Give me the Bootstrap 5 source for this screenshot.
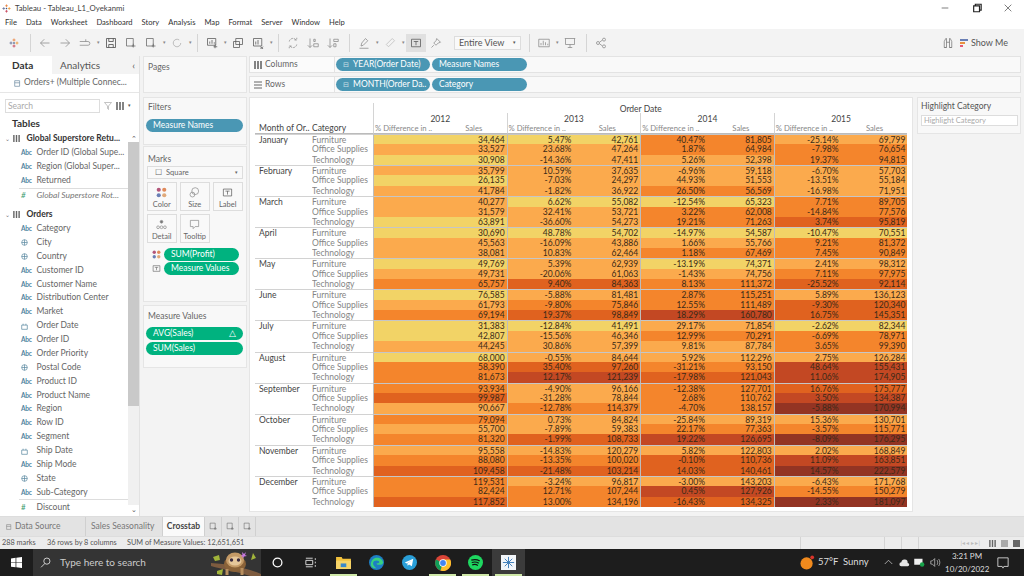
<!DOCTYPE html>
<html lang="en"><head><meta charset="utf-8"><title>Tableau</title>
<link href="https://cdn.jsdelivr.net/npm/bootstrap@5.3.0/dist/css/bootstrap.min.css" rel="stylesheet">
<style>
html,body{width:1024px;height:576px;overflow:hidden;margin:0}
body{font-family:Lato,"Liberation Sans",sans-serif;font-size:8.5px;color:#555;background:#f3f3f3;line-height:1.1}
svg.i{width:12px;height:12px;fill:none;stroke:#888;stroke-width:1;flex:none}
.titlebar{height:16px;background:#fff;color:#444;font-size:7.8px;padding-left:1px}
.winbtn{width:31.5px;text-align:center}
.menubar{height:13px;background:#fff;padding-left:5px;gap:9px;color:#333;font-size:7.6px}
.toolbar{height:27px;background:#f3f3f3;padding-left:4px}
.tb{width:20px;height:18px;flex:none}.tb.act{background:#e0e0e0}
.tc{width:6px;flex:none;text-align:center;font-size:5px;color:#888}
.tdiv{width:1px;height:18px;background:#d5d5d5;margin:0 4px;flex:none}
.fit{width:67px;height:14px;background:#f9f9f9;border:1px solid #ddd;font-size:9px;color:#555;padding-left:4px;margin:0 0 0 8px;flex:none}
.main{height:460px}
.pane{width:140px;background:#fff;border-right:1px solid #e2e2e2;flex:none}
.dtab{height:18px;line-height:18px;font-size:10px}
.dtab .on{width:52px;background:#fff;font-weight:700;color:#333;padding-left:12px}
.dtab .off{flex:1;background:#f3f3f3;padding-left:8px;color:#555}
.src{height:19px;padding-left:14px;font-size:8.5px;color:#666;border-bottom:1px solid #e6e6e6}
.srch{height:20px;padding:5px 0 0 5px}
.form-control.sbox{width:95px;height:14px;min-height:0;border:1px solid #ddd;border-radius:0;padding:0 2px;font-size:8.5px;line-height:12px}
.sbox::placeholder{color:#aaa}
.thead{height:14px;padding-left:12px;font-size:10px;font-weight:700;color:#333;line-height:14px;margin-top:3px}
.flist{flex:1;padding-top:2px;overflow:hidden}
.f{height:13.88px;font-size:8.5px;color:#666;white-space:nowrap}
.f .ty{width:36.5px;flex:none;font-size:6.5px;font-weight:700;color:#4f83a0;padding-left:21px;letter-spacing:-.2px}
.f.g{padding-left:5px;font-weight:700;color:#333;font-size:8.5px}
.f.g .ch{width:8px;color:#777;font-size:6px;font-weight:400}
.f.g svg{width:7px;height:7px;margin:0 6.5px 0 0}
.f.m .ty{color:#3b9c6f;font-size:8px;font-weight:400}
.f.it{font-style:italic;color:#777}
.sep{border-top:1px solid #ddd;margin:0 0 0 19px}
.sbar{width:11px;flex:none;margin-top:4px;background:#f0f0f0;color:#555;font-size:7px;text-align:center}
.sbar .arr{height:8px;line-height:8px;background:#fff}.sbar .th{height:264px;background:#c9c9c9}
.midcol{width:104px;margin-left:3px;flex:none}
.crd{background:#f8f8f8;border:1px solid #e5e5e5;border-radius:0}
.ct{font-size:8.5px;color:#666;padding:6px 0 0 4px}
.ct.ftl{padding-top:5px}.ct.mtl{padding-top:8px}
.fp{margin:7px 0 0 2px;width:97px}
.pill.badge{display:flex;align-items:center;height:13px;padding:0 7px;font-size:8.5px;font-weight:400;color:#fff;border-radius:7px;line-height:13px;white-space:nowrap}
.pb{background:#4a97b4}.pg{background:#00b27f}
.pw{width:94px;margin-left:1px}.pw2{width:95px;margin-left:2px}
.pic{font-size:7px;opacity:.7;margin-right:4px}
.mk{width:29.5px;height:28.5px;border:1px solid #ddd;background:#f9f9f9;font-size:7.5px;color:#666;border-radius:0;padding:2px 0 0;line-height:1}
.mk svg{display:block;margin:0 auto 3px;width:11px;height:11px}
.mks{gap:3.500px;margin:3px 0 0 3px}
.dd{height:13px;margin:2px 3px 0;border:1px solid #ddd;background:#f9f9f9;color:#666;font-size:7.5px;padding-left:7px}
.rt{width:772px;margin-left:2px;flex:none}
.shelf{height:17px;background:#f9f9f9;border:1px solid #e3e3e3}
.shelf .lb{width:85px;border-right:1px solid #e3e3e3;padding-left:4px;font-size:8.5px;color:#666;height:100%;background:#fbfbfb}
.shelf .lb svg{width:8px;height:8px;margin-right:3px}
.viz{width:664px;height:415px;background:#fff;border:1px solid #e5e5e5;padding:5px 0 0 5px}
.xt{display:grid;grid-template-columns:57px 61px repeat(8,66.8px);grid-template-rows:10px 10px 11px;grid-auto-rows:10.36px;font-size:8.5px;line-height:10.3px;width:652.4px}
.xt>div{overflow:hidden;white-space:nowrap}
.hl{text-align:center;color:#444;font-size:8.5px;line-height:12px}
.vl{border-left:1px solid #d4d4d4}
.xt .sh{color:#888;padding-left:1px;font-size:7.7px;border-bottom:1px solid #bbb;line-height:11.5px}
.xt .sh.d{color:#444;padding-left:4px;font-size:8.5px}
.xt .sh.cat{color:#444;padding-left:0;font-size:8.5px}
.sh.s{text-align:center}
.mo{grid-row:span 3;color:#444;padding-left:4px;border-top:1px solid #d2d2d2;line-height:11px}
.ca{color:#858585}.ca.t{border-top:1px solid #d2d2d2}
.n{text-align:right;padding-right:2px;color:#3a2a18;font-size:8.5px}
.n.t{border-top:1px solid #c6c6c6}.n.y{border-left:1px solid #bdbdbd}
.l0{background:#f2d366}.l1{background:#fbaa4d}.l2{background:#f4852c}.l3{background:#e0621f}.l4{background:#c34823}.l5{background:#933423}
.hc{width:104px;height:37px;margin-left:4px}
.form-control.hbox{width:97px;height:11px;min-height:0;border:1px solid #ddd;border-radius:0;margin:4px 0 0 3px;padding:0 2px;font-size:7.5px;line-height:9px}
.hbox::placeholder{color:#aaa}
.tabs{height:20px;background:#e3e3e3;border-top:1px solid #ddd;font-size:8.5px;color:#777}
.tabs>div{height:100%;border-right:1px solid #d0d0d0}
.tabs .on{background:#fafafa;color:#444;font-weight:700;width:42px;justify-content:center;margin-left:0}
.tabs svg{width:9px;height:9px}
.status{height:13px;background:#ececec;border-top:1px solid #ddd;font-size:7.3px;color:#555}
.status .c{border-left:1px solid #d4d4d4;height:100%}
.task{height:27px;background:#1d1d1d;color:#ddd}
.task .start{width:33px}
.task .search{width:228px;height:100%;background:#343434;font-size:10px;color:#ccc;padding-left:6px}
.ti{width:33px;height:100%;flex:none;position:relative}
.ti.on{background:#3b3b3b}
.ti.u::after{content:"";position:absolute;left:3px;right:3px;bottom:0;height:2px;background:#cfe8a8}
.tray{font-size:9.5px;color:#ddd}
.clock{width:44px;text-align:center;font-size:8px;line-height:13px;color:#ddd}
</style></head><body>
<svg class="d-none" xmlns="http://www.w3.org/2000/svg">
<symbol id="back" viewBox="0 0 16 16"><path d="M14 8H2M7 3 2 8l5 5"/></symbol>
<symbol id="fwd" viewBox="0 0 16 16"><path d="M2 8h12M9 3l5 5-5 5"/></symbol>
<symbol id="rep" viewBox="0 0 16 16"><path d="M1 6h11a2 2 0 0 1 0 5H1M9 3v3"/></symbol>
<symbol id="save" viewBox="0 0 16 16"><path d="M2 2h12v12H2zM5 2v4h6V2M5 14v-4h6v4" stroke="#444"/></symbol>
<symbol id="ds" viewBox="0 0 16 16"><path d="M2 2h9v10H2zM11 9v5M9 12h5" stroke="#666"/></symbol>
<symbol id="ref" viewBox="0 0 16 16"><path d="M13 8a5 5 0 1 1-2-4" stroke="#aaa"/></symbol>
<symbol id="sheet" viewBox="0 0 16 16"><path d="M2 2h11v9H2zM5 9V6M8 9V4M11 9V7M12 10v5M10 13h5" stroke="#555"/></symbol>
<symbol id="dup" viewBox="0 0 16 16"><path d="M5 2h9v8H5zM2 6h8v8H2z" stroke="#555"/></symbol>
<symbol id="clr" viewBox="0 0 16 16"><path d="M2 2h11v10H2zM5 10V6M8 10V4M11 13l4 3M15 13l-4 3" stroke="#555"/></symbol>
<symbol id="swap" viewBox="0 0 16 16"><path d="M3 6a5 5 0 0 1 9-2M13 10a5 5 0 0 1-9 2M10 4h3V1M6 12H3v3" stroke-dasharray="3 1"/></symbol>
<symbol id="asc" viewBox="0 0 16 16"><path d="M4 2v12M1 11l3 3 3-3M9 3h2v3H9zM9 9h6v4H9z"/></symbol>
<symbol id="desc" viewBox="0 0 16 16"><path d="M4 2v12M1 11l3 3 3-3M9 3h6v3H9zM9 9h3v4H9z"/></symbol>
<symbol id="pen" viewBox="0 0 16 16"><path d="M10 2l3 3-6 6-3 1 1-4zM2 15h12"/></symbol>
<symbol id="clip" viewBox="0 0 16 16"><path d="M11 2l3 3-8 8-3-3z" stroke="#bbb"/></symbol>
<symbol id="T" viewBox="0 0 16 16"><path d="M2 3h12v10H2zM5 6h6M8 6v5" stroke="#555"/></symbol>
<symbol id="pin" viewBox="0 0 16 16"><path d="M9 2l5 5-3 1-3 3-3-3 3-3zM5 11l-3 3"/></symbol>
<symbol id="chart" viewBox="0 0 16 16"><path d="M1 3h14v10H1zM4 11V8M7 11V5M10 11V7M13 11V9"/></symbol>
<symbol id="pres" viewBox="0 0 16 16"><path d="M1 2h14M2 2v8h12V2M8 10v4M5 14h6"/></symbol>
<symbol id="share" viewBox="0 0 16 16"><circle cx="4" cy="8" r="2"/><circle cx="12" cy="3.500" r="2"/><circle cx="12" cy="12.500" r="2"/><path d="M6 7l4-3M6 9l4 3"/></symbol>
<symbol id="bino" viewBox="0 0 16 16"><path d="M3 14V6l2-4h1v12zM10 14V2h1l2 4v8zM3 14h3M10 14h3M6 7h4" stroke="#777"/></symbol>
<symbol id="logo" viewBox="0 0 16 16"><path d="M8 2v4M6 4h4" stroke="#e8762b"/><path d="M8 10v4M6 12h4" stroke="#c2344d"/><path d="M2 8h4M4 6v4" stroke="#5b6591"/><path d="M10 8h4M12 6v4" stroke="#eb912b"/><path d="M7 8h2M8 7v2" stroke="#1f447a"/></symbol>
<symbol id="cols" viewBox="0 0 8 8"><path d="M1 0v8M4 0v8M7 0v8" stroke="#666" stroke-width="1.600"/></symbol>
<symbol id="rows" viewBox="0 0 8 8"><path d="M0 1h8M0 4h8M0 7h8" stroke="#666" stroke-width="1.200"/></symbol>
</svg>

<div class="titlebar d-flex align-items-center"><svg class="i" viewBox="0 0 16 16" style="width:11px;height:11px"><use href="#logo"/></svg><span style="margin-left:3px">Tableau - Tableau_L1_Oyekanmi</span>
 <div class="ms-auto d-flex align-items-center">
  <div class="winbtn"><svg class="i" viewBox="0 0 12 12" style="width:10px;height:10px"><path d="M2 6h8" stroke="#666"/></svg></div>
  <div class="winbtn"><svg class="i" viewBox="0 0 12 12" style="width:10px;height:10px"><path d="M2 3.500h7v7H2zM4 3.500V1.500h7v7H9" stroke="#222" stroke-width="1.400"/></svg></div>
  <div class="winbtn"><svg class="i" viewBox="0 0 12 12" style="width:10px;height:10px"><path d="M2 2l8 8M10 2l-8 8" stroke="#666"/></svg></div>
 </div></div>
<div class="menubar d-flex align-items-center"><span>File</span><span>Data</span><span>Worksheet</span><span>Dashboard</span><span>Story</span><span>Analysis</span><span>Map</span><span>Format</span><span>Server</span><span>Window</span><span>Help</span></div>

<div class="toolbar d-flex align-items-center" id="tbar"></div>

<div class="main d-flex">
 <div class="pane d-flex flex-column">
  <div class="dtab d-flex"><div class="on">Data</div><div class="off d-flex justify-content-between"><span>Analytics</span><span class="pe-1">‹</span></div></div>
  <div class="src d-flex align-items-center"><svg class="i" viewBox="0 0 10 12" style="width:7px;height:9px;margin-right:3px;stroke:#6d8aa0"><path d="M1 2h7v8H1zM1 5h7"/></svg>Orders+ (Multiple Connec...</div>
  <div class="srch d-flex align-items-center"><input class="form-control sbox" placeholder="Search"><svg class="i ms-1" style="width:8px;height:8px" viewBox="0 0 16 16"><path d="M1 1h14L9 8v7l-2-2V8z"/></svg><svg class="i ms-1" style="width:8px;height:8px" viewBox="0 0 8 8"><use href="#cols"/></svg><span class="ms-1" style="font-size:5px">▾</span></div>
  <div class="thead">Tables</div>
  <div class="d-flex flex-grow-1" style="min-height:0">
   <div class="flist" id="flist"></div>
   <div class="sbar d-flex flex-column"><div class="arr">⌃</div><div class="th"></div><div class="flex-grow-1"></div><div class="arr" style="height:11px">⌄</div></div>
  </div>
 </div>
 <div class="midcol d-flex flex-column">
  <div class="crd" style="height:37px"><div class="ct">Pages</div></div>
  <div class="crd mt-1" style="height:48px"><div class="ct ftl">Filters</div><div class="fp"><span class="pill badge pb">Measure Names</span></div></div>
  <div class="crd" style="height:156px;margin-top:1px"><div class="ct mtl">Marks</div>
   <div class="dd d-flex align-items-center"><span class="me-1">☐</span>Square<span class="ms-auto pe-1" style="font-size:5px">▾</span></div>
   <div class="mks d-flex flex-wrap">
    <button class="btn mk"><svg viewBox="0 0 16 16"><circle cx="4" cy="4" r="3" fill="#b3567a" stroke="none"/><circle cx="12" cy="4" r="3" fill="#e08a5a" stroke="none"/><circle cx="4" cy="12" r="3" fill="#6a7fb5" stroke="none"/><circle cx="12" cy="12" r="3" fill="#e0a97a" stroke="none"/></svg>Color</button>
    <button class="btn mk"><svg class="i" viewBox="0 0 16 16"><circle cx="9" cy="6" r="5"/><circle cx="5" cy="11" r="3.500"/></svg>Size</button>
    <button class="btn mk"><svg class="i" viewBox="0 0 16 16"><use href="#T"/></svg>Label</button>
    <button class="btn mk"><svg class="i" viewBox="0 0 16 16"><circle cx="8" cy="4" r="2" fill="#777"/><circle cx="3" cy="12" r="2"/><circle cx="8" cy="12" r="2"/><circle cx="13" cy="12" r="2"/></svg>Detail</button>
    <button class="btn mk"><svg class="i" viewBox="0 0 16 16"><path d="M2 2h12v9H9l-3 3v-3H2z"/></svg>Tooltip</button>
   </div>
   <div class="d-flex align-items-center" style="margin:5px 0 0 8px;gap:3px"><svg viewBox="0 0 16 16" style="width:9px;height:9px;flex:none"><circle cx="4" cy="4" r="3" fill="#b3567a"/><circle cx="12" cy="4" r="3" fill="#e08a5a"/><circle cx="4" cy="12" r="3" fill="#6a7fb5"/><circle cx="12" cy="12" r="3" fill="#e0a97a"/></svg><span class="pill badge pg" style="width:75px">SUM(Profit)</span></div>
   <div class="d-flex align-items-center" style="margin:1px 0 0 8px;gap:3px"><svg class="i" viewBox="0 0 16 16" style="width:9px;height:9px"><use href="#T"/></svg><span class="pill badge pg" style="width:75px">Measure Values</span></div>
  </div>
  <div class="crd" style="height:63px;margin-top:3px"><div class="ct">Measure Values</div>
   <div style="margin:6px 3px 0 2px"><span class="pill badge pg justify-content-between">AVG(Sales)<span>△</span></span><span class="pill badge pg" style="margin-top:2px">SUM(Sales)</span></div></div>
 </div>
 <div class="rt d-flex flex-column">
  <div class="shelf d-flex align-items-center"><div class="lb d-flex align-items-center"><svg class="i" viewBox="0 0 8 8"><use href="#cols"/></svg>Columns</div><span class="pill badge pb pw"><span class="pic">⊟</span>YEAR(Order Date)</span><span class="pill badge pb pw2">Measure Names</span></div>
  <div class="shelf d-flex align-items-center" style="margin-top:3px"><div class="lb d-flex align-items-center"><svg class="i" viewBox="0 0 8 8"><use href="#rows"/></svg>Rows</div><span class="pill badge pb pw"><span class="pic">⊟</span>MONTH(Order Da..</span><span class="pill badge pb pw2">Category</span></div>
  <div class="d-flex" style="margin-top:4px">
   <div class="viz"><div class="xt" id="xt"></div></div>
   <div class="crd hc"><div class="ct" style="padding:4px 0 0 3px;color:#555">Highlight Category</div><input class="form-control hbox" placeholder="Highlight Category"></div>
  </div>
 </div>
</div>

<div class="tabs d-flex">
 <div class="d-flex align-items-center" style="width:86px;padding-left:6px"><svg class="i" viewBox="0 0 10 12" style="width:6px;height:8px;margin-right:3px"><path d="M1 2h7v8H1zM1 5h7"/></svg>Data Source</div>
 <div class="d-flex align-items-center" style="width:77px;padding-left:5px">Sales Seasonality</div>
 <div class="on d-flex align-items-center">Crosstab</div>
 <div class="d-flex align-items-center justify-content-center" style="width:17px"><svg class="i" viewBox="0 0 16 16"><use href="#ds"/></svg></div>
 <div class="d-flex align-items-center justify-content-center" style="width:17px"><svg class="i" viewBox="0 0 16 16"><use href="#ds"/></svg></div>
 <div class="d-flex align-items-center justify-content-center" style="width:17px"><svg class="i" viewBox="0 0 16 16"><use href="#ds"/></svg></div>
</div>
<div class="status d-flex align-items-center">
 <span style="width:47px;padding-left:2px">288 marks</span><span style="width:80px">36 rows by 8 columns</span><span style="width:673px">SUM of Measure Values: 12,651,651</span>
 <div class="c" style="width:84px"></div><div class="c" style="width:17px"></div><div class="c" style="width:17px"></div><div class="c d-flex align-items-center flex-grow-1 justify-content-end pe-1" style="gap:5px;font-size:6px;color:#bbb"><span class="me-1">|◂ ◂ ▸ ▸|</span><svg viewBox="0 0 8 8" style="width:7px;height:7px"><use href="#cols"/></svg><svg viewBox="0 0 8 8" style="width:7px;height:7px"><rect width="8" height="8" fill="#aaa"/></svg><svg viewBox="0 0 8 8" style="width:7px;height:7px"><rect width="8" height="8" fill="#666"/></svg></div>
</div>

<div class="task d-flex align-items-center">
 <div class="start d-flex justify-content-center"><svg viewBox="0 0 12 12" style="width:11px;height:11px"><path d="M0 1.500l5-.7V5.700H0zM5.800.7 12 0v5.700H5.800zM0 6.300h5v4.900l-5-.7zM5.800 6.300H12V12l-6.200-.8z" fill="#fff"/></svg></div>
 <div class="search d-flex align-items-center"><svg viewBox="0 0 16 16" style="width:11px;height:11px;margin:0 9px 0 1px;flex:none" fill="none" stroke="#ddd" stroke-width="1.300"><circle cx="10" cy="6" r="4.500"/><path d="M7 9.500 1.500 15"/></svg><span>Type here to search</span>
  <svg class="ms-auto" viewBox="0 0 52 27" style="width:52px;height:27px;flex:none"><path d="M2 17c14 4 34 7 50 14l0-6C38 19 20 15 2 14z" fill="#7d5b3f"/><ellipse cx="26" cy="15" rx="11" ry="8" fill="#8a6238"/><ellipse cx="26" cy="11" rx="9" ry="7.500" fill="#c49a66"/><ellipse cx="26" cy="12" rx="6.500" ry="4.500" fill="#e6c79a"/><circle cx="22.500" cy="11" r="1.700" fill="#3a2a3e"/><circle cx="29.500" cy="11" r="1.700" fill="#3a2a3e"/><path d="M18 20v6M33 19v7" stroke="#b88f5f" stroke-width="3"/><path d="M4 8l6-2 1 5-5 1zM8 22l6-2-1 6-5-1zM44 4l3 5-5 2z" fill="#a2b53a"/><path d="M33 3l2 2 2-2-1 3 2 1-3 .5-1 2-.5-2-2-.5 2-1z" fill="#c778df"/></svg></div>
 <div class="ti d-flex align-items-center justify-content-center"><svg viewBox="0 0 12 12" style="width:11px;height:11px"><circle cx="6" cy="6" r="4.800" fill="none" stroke="#fff" stroke-width="1.400"/></svg></div>
 <div class="ti d-flex align-items-center justify-content-center"><svg viewBox="0 0 14 12" style="width:12px;height:11px" fill="none" stroke="#ddd" stroke-width="1.100"><path d="M1 1h8M1 11h8M1 3.500h8v5H1zM12 1v2M12 5v2M12 9v2"/></svg></div>
 <div class="ti u d-flex align-items-center justify-content-center"><svg viewBox="0 0 16 14" style="width:15px;height:13px"><path d="M0 1h6l1 2h9v11H0z" fill="#f3c23c"/><rect y="5" width="16" height="9" fill="#f7d568"/><rect x="5" y="8" width="6" height="4" fill="#3a89c9"/></svg></div>
 <div class="ti d-flex align-items-center justify-content-center"><svg viewBox="0 0 16 16" style="width:15px;height:15px"><circle cx="8" cy="8" r="8" fill="#1d7ec4"/><path d="M2 10c0-5 4-8 8-7 3 .7 5 3 5 5 0 2-2 2.500-5 2.500-1 0-2-1-2-1.500 2 0 3-.5 3-1.500C11 6 8 5 5.500 6.500 3.500 8 4 12 8 14c-3 .5-6-1-6-4z" fill="#38d07f"/></svg></div>
 <div class="ti d-flex align-items-center justify-content-center"><svg viewBox="0 0 16 16" style="width:15px;height:15px"><circle cx="8" cy="8" r="8" fill="#2a9fd8"/><path d="M3 8l9-4-1.500 8-3-2-1.500 1.500-.3-2.500L10 6 5 9z" fill="#fff"/></svg></div>
 <div class="ti u d-flex align-items-center justify-content-center"><svg viewBox="0 0 16 16" style="width:16px;height:16px"><circle cx="8" cy="8" r="8" fill="#db4437"/><path d="M8 8 1 4.500A8 8 0 0 0 5.500 15.600z" fill="#0f9d58"/><path d="M8 4.500h7.200A8 8 0 0 1 5.500 15.600L8 8z" fill="#fbc02d"/><circle cx="8" cy="8" r="3.700" fill="#fff"/><circle cx="8" cy="8" r="2.900" fill="#4285f4"/></svg></div>
 <div class="ti u d-flex align-items-center justify-content-center"><svg viewBox="0 0 16 16" style="width:15px;height:15px"><circle cx="8" cy="8" r="8" fill="#1ed760"/><path d="M3.500 5.500c3-1 6.500-.7 9 .8M4 8c2.500-.8 5.500-.5 7.500.7M4.500 10.500c2-.6 4.500-.4 6 .6" fill="none" stroke="#111" stroke-width="1.300"/></svg></div>
 <div class="ti u on d-flex align-items-center justify-content-center"><svg viewBox="0 0 16 16" style="width:15px;height:15px"><rect width="16" height="16" fill="#f2f6fa"/><path d="M8 2v12M2 8h12M4 4l8 8M12 4l-8 8" stroke="#3a7bb8"/></svg></div>
 <div class="tray ms-auto d-flex align-items-center">
  <svg viewBox="0 0 16 16" style="width:15px;height:15px;margin-right:3px"><circle cx="7" cy="9" r="6.500" fill="#f18a1d"/><circle cx="13" cy="2.500" r="2" fill="#d9342b"/></svg>
  <span style="width:66px">57°F&nbsp; Sunny</span>
  <svg class="i" viewBox="0 0 12 12" style="width:9px;height:9px;stroke:#ccc"><path d="M1 8l5-5 5 5"/></svg>
  <svg viewBox="0 0 14 10" style="width:11px;height:8px;margin-left:6px"><path d="M3 9a2.500 2.500 0 0 1 0-5 4 4 0 0 1 8 1 2 2 0 0 1 0 4z" fill="#e6e6e6"/></svg>
  <svg viewBox="0 0 14 12" style="width:11px;height:9px;margin-left:4px"><rect y="1" width="11" height="8" fill="#eee"/><circle cx="10.500" cy="8.500" r="3" fill="#17a34a"/></svg>
  <svg class="i" viewBox="0 0 14 14" style="width:11px;height:11px;margin-left:5px;stroke:#bbb"><path d="M1 5h2l3-3v10l-3-3H1zM9 4c1 1.500 1 4.500 0 6M11 2.500c2 2.500 2 6.500 0 9"/></svg>
  <div class="clock ms-1">3:21 PM<br>10/20/2022</div>
  <svg class="i" viewBox="0 0 14 14" style="width:12px;height:12px;margin:0 15px 0 8px;stroke:#ddd"><path d="M1 1h12v10H8l-1 2-1-2H1z"/></svg>
 </div>
</div>

<script src="https://cdn.jsdelivr.net/npm/bootstrap@5.3.0/dist/js/bootstrap.bundle.min.js"></script>
<script>
// toolbar
const I=n=>`<div class="tb d-flex align-items-center justify-content-center"><svg class="i" viewBox="0 0 16 16"><use href="#${n}"/></svg></div>`,
C='<span class="tc">▾</span>',D='<div class="tdiv"></div>';
document.getElementById('tbar').innerHTML=I('logo')+'<div class="tdiv" style="margin-left:6px"></div>'+I('back')+I('fwd')+I('rep')+C+I('save')+I('ds')+I('ds')+C+I('ref')+C+D+I('sheet')+C+I('dup')+I('clr')+C+D+I('swap')+I('asc')+I('desc')+'<div class="tdiv" style="margin-left:6px"></div>'+I('pen')+C+I('clip')+C+I('T').replace('tb ','tb act ')+I('pin')
+'<div class="fit d-flex align-items-center justify-content-between">Entire View<span class="pe-1" style="font-size:5px">▾</span></div>'+'<div class="tdiv" style="margin-left:8px"></div>'+I('chart')+C+I('pres')+'<div class="tdiv" style="margin-left:6px"></div>'+I('share')
+'<div class="ms-auto d-flex align-items-center" style="margin-right:16px">'+I('bino')+'<svg viewBox="0 0 8 8" style="width:8px;height:8px;margin:0 3px 0 2px"><rect width="8" height="2" fill="#6a7fb5"/><rect y="3" width="5" height="2" fill="#e8913f"/><rect y="6" width="3" height="2" fill="#e45a76"/></svg><span style="font-size:9px;color:#555">Show Me</span></div>';
// field list
const g=(n,cls)=>`<div class="f g d-flex align-items-center ${cls||''}"><span class="ch">⌄</span><svg class="i" viewBox="0 0 8 8"><use href="#cols"/></svg>${n}</div>`;
const ic={a:'Abc',g:'<svg viewBox="0 0 10 10" style="width:7px;height:7px" fill="none" stroke="#58879f"><circle cx="5" cy="5" r="4"/><path d="M1 5h8M5 1v8"/></svg>',d:'<svg viewBox="0 0 10 10" style="width:7px;height:7px" fill="none" stroke="#58879f"><path d="M1 3h8v6H1zM3 1v2M7 1v2"/></svg>',m:'#'};
const f=(t,n,c)=>`<div class="f d-flex align-items-center ${t=='m'?'m':''} ${c||''}"><span class="ty">${ic[t]}</span>${n}</div>`;
let h=g('Global Superstore Retu...')+f('a','Order ID (Global Supe...')+f('a','Region (Global Super...')+f('a','Returned')+'<div class="sep"></div>'+f('m','Global Superstore Rot...','it')+'<div style="height:5.500px"></div>'+g('Orders');
[['a','Category'],['g','City'],['g','Country'],['a','Customer ID'],['a','Customer Name'],['a','Distribution Center'],['a','Market'],['d','Order Date'],['a','Order ID'],['a','Order Priority'],['g','Postal Code'],['a','Product ID'],['a','Product Name'],['a','Region'],['a','Row ID'],['a','Segment'],['d','Ship Date'],['a','Ship Mode'],['g','State'],['a','Sub-Category']].forEach(x=>h+=f(x[0],x[1]));
h+='<div class="sep"></div>'+f('m','Discount');
document.getElementById('flist').innerHTML=h;
// crosstab: [2012 sales, lvl], [2013 pct, sales, lvl], ...
const M=['January','February','March','April','May','June','July','August','September','October','November','December'],Cat=['Furniture','Office Supplies','Technology'];
const R=`34,464 0|5.47% 42,761 0|40.47% 81,805 2|-25.14% 69,799 1
33,527 1|23.68% 47,264 1|1.87% 64,984 2|-7.98% 76,654 2
30,908 0|-14.36% 47,411 1|5.26% 52,398 1|19.37% 94,815 2
35,799 1|10.59% 37,635 1|-6.96% 59,118 1|-6.70% 57,703 1
26,135 0|-7.03% 24,297 1|44.93% 51,553 1|-13.51% 55,184 1
41,784 1|-1.82% 36,922 1|26.50% 56,569 2|-16.98% 71,951 1
40,277 1|6.62% 55,082 0|-12.54% 65,323 0|7.71% 89,705 2
31,579 1|32.41% 53,721 1|3.22% 62,008 2|-14.84% 77,576 2
63,891 0|-36.60% 54,273 1|19.21% 71,263 2|3.74% 95,819 3
30,690 0|48.78% 54,702 0|-14.97% 54,587 0|-10.47% 70,551 0
45,563 1|-16.09% 43,886 1|1.66% 55,766 1|9.21% 81,372 2
38,081 1|10.83% 62,464 1|1.18% 67,469 2|7.45% 90,849 2
49,769 0|5.39% 62,939 1|-13.19% 74,371 0|2.41% 98,312 1
49,731 1|-20.06% 61,063 1|-1.43% 74,756 1|7.11% 97,975 2
65,757 2|9.40% 84,363 3|8.13% 111,372 2|-25.52% 92,114 3
76,585 0|-5.88% 81,481 1|2.87% 115,251 2|5.89% 136,123 1
61,793 1|-9.80% 75,846 2|12.55% 111,489 2|-9.30% 120,340 3
69,194 2|19.37% 98,849 3|18.29% 160,780 4|16.75% 145,351 3
31,383 0|-12.84% 41,491 0|29.17% 71,854 1|-2.62% 82,344 0
42,807 0|-15.56% 46,346 1|12.99% 70,291 2|-6.69% 78,971 2
44,245 1|30.86% 57,399 1|9.81% 87,784 1|3.65% 99,390 2
68,000 0|-0.55% 84,644 1|5.92% 112,296 1|2.75% 126,284 1
58,390 2|35.40% 97,260 3|-31.21% 93,150 2|48.64% 155,431 4
81,673 2|12.17% 121,239 4|-17.98% 121,043 3|11.06% 174,905 4
93,934 2|-4.90% 96,166 1|-12.38% 127,701 2|16.76% 175,777 3
99,987 3|-31.28% 78,844 1|2.68% 110,762 2|3.50% 134,387 4
90,667 1|-12.78% 114,379 2|-4.70% 138,157 2|-5.88% 170,994 5
79,094 2|0.73% 84,824 1|-25.84% 89,319 1|15.36% 130,701 1
55,700 1|-7.89% 59,383 1|22.17% 77,363 2|-3.57% 115,771 2
81,320 2|-1.99% 108,733 3|19.22% 126,695 4|-8.09% 176,295 5
95,558 1|-14.83% 120,279 1|5.82% 122,803 1|2.02% 168,849 1
88,080 2|-13.35% 100,020 2|-0.10% 110,736 3|11.09% 163,851 4
109,458 3|-21.48% 103,214 3|14.03% 140,461 3|14.57% 222,579 5
119,531 2|-3.24% 96,817 1|-3.00% 143,203 1|-6.43% 171,768 1
82,424 2|12.71% 107,244 2|0.45% 127,926 4|-14.55% 150,279 2
117,852 3|13.00% 134,196 2|-16.43% 134,325 3|2.33% 181,097 5`.split('\n');
let t='<div style="grid-column:span 2"></div><div class="hl vl" style="grid-column:span 8">Order Date</div>'+'<div style="grid-column:span 2"></div>';
[2012,2013,2014,2015].forEach((y,k)=>t+=`<div class="hl vl" style="grid-column:span 2">${y}</div>`);
t+='<div class="sh d">Month of Or..</div><div class="sh cat">Category</div>';
for(let i=0;i<4;i++)t+='<div class="sh vl">% Difference in ..</div><div class="sh s">Sales</div>';
R.forEach((r,i)=>{const top=i%3==0?' t':'';
 if(i%3==0)t+=`<div class="mo">${M[i/3]}</div>`;
 t+=`<div class="ca${top}">${Cat[i%3]}</div>`;
 r.split('|').forEach((c,j)=>{const p=c.split(' ');const l=p[p.length-1];
  const pct=j?p[0]:'',sa=j?p[1]:p[0];
  t+=`<div class="n y l${l}${top}">${pct}</div><div class="n l${l}${top}">${sa}</div>`;});
});
document.getElementById('xt').innerHTML=t;
</script>
</body></html>
